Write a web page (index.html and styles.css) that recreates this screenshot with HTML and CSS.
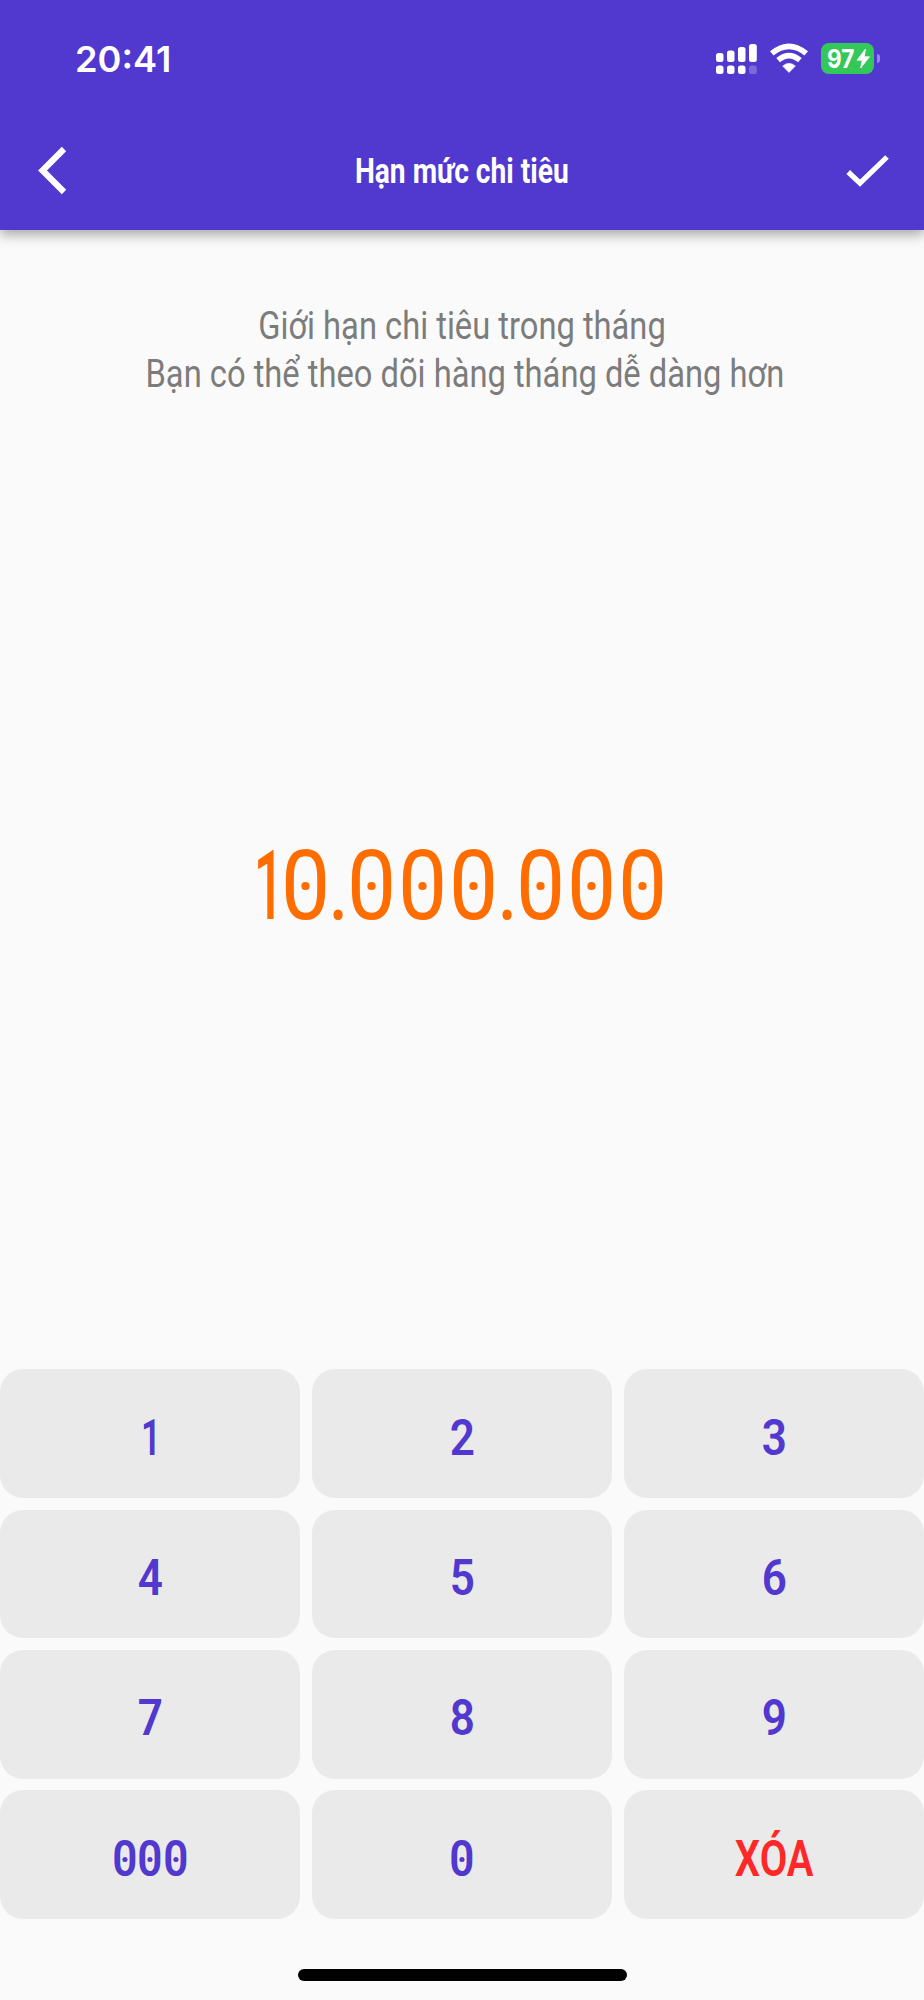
FILE: index.html
```html
<!DOCTYPE html>
<html lang="vi">
<head>
<meta charset="utf-8">
<title>Hạn mức chi tiêu</title>
<link rel="stylesheet" href="styles.css">
</head>
<body>
<div class="screen">
  <header class="header">
    <div class="status">
      <span class="time">20:41</span>
      <div class="indicators">
        <svg class="signal" width="42" height="32" viewBox="0 0 42 32" fill="#fff">
          <rect x="0" y="10" width="7.5" height="9" rx="2.5"/><rect x="11" y="7.5" width="7.5" height="11.5" rx="2.5"/><rect x="22" y="4" width="7.5" height="15" rx="2.5"/><rect x="33" y="1" width="7.8" height="18" rx="2.5"/>
          <rect x="0" y="22.5" width="7.5" height="8.5" rx="2.5"/><rect x="11" y="22.5" width="7.5" height="8.5" rx="2.5"/><rect x="22" y="22.5" width="7.5" height="8.5" rx="2.5"/><rect x="33" y="22.5" width="7.8" height="8.5" rx="2.5" opacity=".25"/>
        </svg>
        <svg class="wifi" width="40" height="30" viewBox="0 0 40 30">
          <g fill="none" stroke="#fff" stroke-width="5.6"><path d="M2.8 10.4Q20-3.8 37.2 10.4"/><path d="M9.1 17.2Q20 8 30.9 17.2"/></g>
          <path d="M13.6 23Q20 17.5 26.4 23L20 29.5Z" fill="#fff" stroke="#fff" stroke-width=".5"/>
        </svg>
        <div class="battery">
          <span class="level">97</span>
          <svg width="15" height="21" viewBox="0 0 15 21" fill="#fff"><path d="M9.5 1L1 12.2h5.2L4.7 20 13.5 8.8H8.2Z" stroke="#fff" stroke-width=".8" stroke-linejoin="round"/></svg>
        </div>
        <span class="nub"></span>
      </div>
    </div>
    <nav class="nav">
      <svg width="30" height="50" viewBox="0 0 30 50"><path d="M26 3L4.5 24.5 26 46" fill="none" stroke="#fff" stroke-width="6.2"/></svg>
      <h1 class="title"><span>Hạn mức chi tiêu</span></h1>
      <svg width="44" height="34" viewBox="0 0 44 34"><path d="M3.2 18L15 29.2 42 3" fill="none" stroke="#fff" stroke-width="5.2"/></svg>
    </nav>
  </header>
  <p class="hint"><span class="line first">Giới hạn chi tiêu trong tháng</span><span class="line second">Bạn có thể theo dõi hàng tháng dễ dàng hơn</span></p>
  <main class="amount"><span class="one">1</span><span class="zero">0</span><span class="dot">.</span><span class="zero">0</span><span class="zero">0</span><span class="zero">0</span><span class="dot">.</span><span class="zero">0</span><span class="zero">0</span><span class="zero">0</span></main>
  <section class="keypad">
    <button class="key"><span class="unit">1</span></button><button class="key"><span>2</span></button><button class="key"><span>3</span></button>
    <button class="key"><span>4</span></button><button class="key"><span>5</span></button><button class="key"><span>6</span></button>
    <button class="key"><span>7</span></button><button class="key"><span>8</span></button><button class="key"><span>9</span></button>
    <button class="key"><span class="zero">0</span><span class="zero">0</span><span class="zero">0</span></button><button class="key"><span class="zero">0</span></button><button class="key clear"><span>XÓA</span></button>
  </section>
  <div class="home"></div>
</div>
</body>
</html>
```
FILE: styles.css
```css
* { box-sizing: border-box; }
body { margin: 0; background: #fafafa; font-family: Roboto, sans-serif; }
.screen { width: 924px; height: 2000px; display: flex; flex-direction: column; overflow: hidden; }
.header { height: 230px; flex: none; background: #5138ce; color: #fff; box-shadow: 0 6px 12px rgba(0,0,0,.24), 0 3px 8px rgba(0,0,0,.1); }
.status { height: 112px; display: flex; justify-content: space-between; padding: 42px 44px 0 75px; }
.time { font: 600 36px/34px Inter, sans-serif; transform: scaleX(1.005); transform-origin: left; }
.indicators { display: flex; align-items: flex-start; height: 32px; }
.signal { margin: 1px 11px 0 0; }
.wifi { margin: 1px 12px 0 0; }
.battery { width: 53px; height: 31px; margin-top: 1px; border-radius: 8px; background: #34c759; display: flex; align-items: center; padding-left: 6px; }
.level { width: 29px; font: 700 26px/31px Inter, sans-serif; transform: scaleX(.87); transform-origin: left; }
.battery svg { flex: none; }
.nub { width: 3px; height: 9px; margin: 12px 0 0 3px; border-radius: 0 4px 4px 0; background: #9785e2; }
.nav { height: 118px; display: flex; justify-content: space-between; align-items: center; padding: 0 35px 0 38px; }
.title { margin: 0; padding: 2px 0 0 10px; width: 222px; display: flex; justify-content: center; white-space: nowrap; font-size: 35px; line-height: 44px; font-weight: 700; }
.title span { transform: scaleX(.805); }
.hint { margin: 73px 0 0; height: 96px; flex: none; color: #7c7c7c; font-size: 38px; line-height: 47.5px; display: flex; flex-direction: column; align-items: center; white-space: nowrap; }
.line { transform: scaleX(.86); }
.second { padding-left: 7px; }
.amount { flex: 1; display: flex; justify-content: center; align-items: center; color: #ff6d00; font-size: 96px; line-height: 112px; padding: 4px 3px 0 0; }
.amount span { display: flex; justify-content: center; }
.amount .one { width: 27px; padding-left: 8px; font-weight: 500; transform: scaleX(.55); }
.amount .zero { width: 51.1px; transform: scaleX(.91); }
.amount .dot { width: 15.2px; transform: scaleX(.85); }
.zero { position: relative; }
.zero::after { content: ""; position: absolute; left: 50%; top: 50%; width: .09em; height: .08em; margin: -.04em 0 0 -.045em; border-radius: 50%; background: currentColor; }
.keypad { flex: none; display: grid; grid-template-columns: repeat(3, 300px); grid-auto-rows: 128.7px; gap: 11.6px 12px; }
.key { border: 0; padding: 8px 0 0; border-radius: 23px; background: #eaeaea; color: #5138ce; font: 600 50px/58px Roboto, sans-serif; display: flex; align-items: center; justify-content: center; }
.key span { transform: scaleX(.88); }
.key .zero { width: 25.6px; display: flex; justify-content: center; }
.key .zero::after { width: 5.5px; height: 5px; margin: -2px 0 0 -2.75px; }
.key .unit { padding-left: 2px; transform: scaleX(.7); }
.key.clear { color: #ff2828; }
.key.clear span { transform: scaleX(.8); }
.home { flex: none; width: 329px; height: 12px; margin: 50px auto 19px 298px; border-radius: 6px; background: #000; }
```
